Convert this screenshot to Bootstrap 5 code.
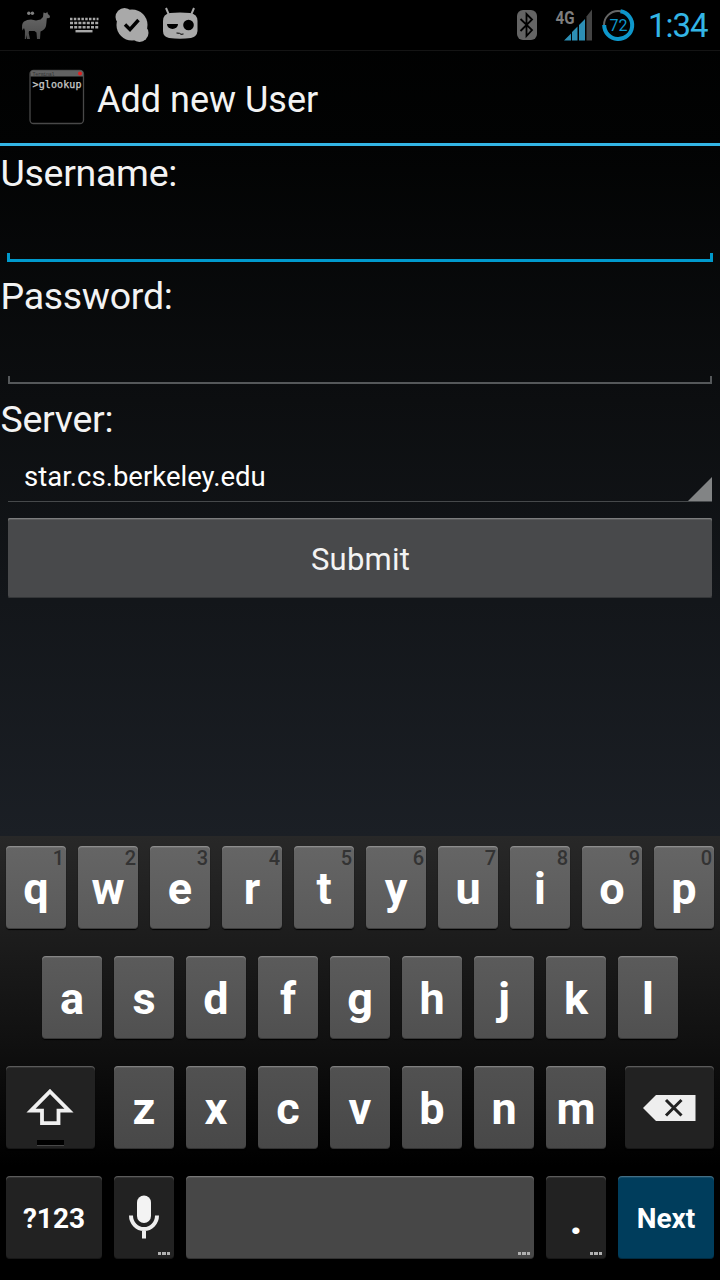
<!DOCTYPE html>
<html lang="en">
<head>
<meta charset="utf-8">
<meta name="viewport" content="width=device-width, initial-scale=1">
<title>Add new User</title>
<link href="https://cdn.jsdelivr.net/npm/bootstrap@5.3.0/dist/css/bootstrap.min.css" rel="stylesheet">
<style>
  body { font-family: Roboto, "Noto Sans", sans-serif; background: #000; color: #f3f3f3; }
  .phone { width: 720px; height: 1280px; background: linear-gradient(#000 0, #020303 146px, #0c0e10 400px, #13161a 600px, #1b1f25 836px); }
  .status { height: 51px; background: #000; border-bottom: 1px solid #141414; }
  .clock { font-size: 33px; line-height: 52px; color: #33b5e5; width: 61px; letter-spacing: -1px; white-space: nowrap; }
  .actionbar { height: 95px; border-bottom: 3px solid #33b5e5; padding: 0 0 1px 29px; }
  .page-title { font-size: 36px; line-height: 44px; margin-left: 12px; padding-top: 7px; }
  .field-group { height: 123px; }
  .field-label { font-size: 37.5px; line-height: 44px; padding: 5px 0 0 .5px; letter-spacing: -.3px; }
  .line-input { margin: 58px 8px 0; height: 8px; border: 2px solid #55585a; border-top: 0; }
  .line-input.active { margin: 58px 7px 0; height: 9px; border-color: #0099cc; border-width: 0 3px 3px; }
  .spinner-box { height: 61px; margin: 0 8px; border-bottom: 1px solid #46494b; padding: 0 0 0 16px; font-size: 27.5px; line-height: 32px; color: #fff; }
  .spinner-box span { padding-top: 12px; }
  .btn-submit { height: 80px; margin: 16px 8px 0; padding: 9px 0 6px 1px; border: 0; border-radius: 2px; background: #48494b; color: #f3f3f3; font-size: 31px; line-height: 36px; letter-spacing: .2px; box-shadow: inset 0 1px #7c7d7e, inset 0 2px #5a5b5c, inset 0 -1px #343638; }
  .keyboard { height: 444px; padding: 10px 6px 21px; background: linear-gradient(#282828 0, #111 200px, #000 330px); }
  .key-row { height: 83px; gap: 12px; }
  .key { width: 60px; height: 83px; flex: none; padding-top: 2px; border-radius: 4px; color: #fff; font-weight: 700; font-size: 45px; line-height: 81px; box-shadow: inset 0 1px rgba(255,255,255,.2), inset 0 2px rgba(255,255,255,.08), inset 0 -1px rgba(0,0,0,.3), 0 1px 1px #000; }
  .r1 .key { background: linear-gradient(#656565, #5a5a5a); }
  .r2 .key { background: linear-gradient(#5b5b5b, #505050); }
  .r3 .key { background: linear-gradient(#515151, #484848); }
  .r4 .key { background: #474747; }
  .keyboard .key.dark { background: #222; }
  .keyboard .key.next { background: #003d5c; }
  .wide { width: 96px; font-size: 28px; }
  .side { width: 89px; }
  .hint { right: 2px; top: 0; font-size: 20px; line-height: 24px; font-weight: 500; color: #333; }
  .more { right: 4px; bottom: 4px; display: flex; gap: 1px; }
  .more i { width: 3.3px; height: 3px; background: #b0b0b0; }
  svg { display: block; flex: none; }
</style>
</head>
<body>
<div class="phone d-flex flex-column overflow-hidden">
  <header class="status d-flex justify-content-between align-items-start">
    <svg width="220" height="50" viewBox="0 0 220 50">
      <defs><linearGradient id="fur" x2="0" y2="1"><stop offset="0" stop-color="#6a6a6a"/><stop offset="1" stop-color="#4c4c4c"/></linearGradient></defs>
      <!-- llama -->
      <path fill="url(#fur)" d="M43.500 12.500L46 13.300L47.200 11.800L48 14L50 16L49.500 18L46.800 18.300Q46.500 23 46 26Q45 29.500 40.500 31.500L40 39H37L36.500 32.500L34.500 31H29L28.700 33L30 39H27L26.500 35L26 39H24.800L25 31L24 28L22.500 30.500Q21 24 24 21.500Q27 19.500 31 19.500L36 20.500L40.500 19.500L43 17Z"/>
      <g fill="#808080"><circle cx="28.800" cy="13.300" r="1.700"/><circle cx="32.400" cy="13.300" r="1.700"/></g>
      <!-- keyboard -->
      <g stroke="#a8a8a8" stroke-width="2.400"><path stroke-dasharray="2.500 1.300" d="M70 19h28.500"/><path stroke-dasharray="3 1.200" d="M70 23h28.500M70 27.200h28.500"/><path d="M75.500 31.200h17"/></g>
      <!-- chat check -->
      <g fill="#a9a9a9"><circle cx="132" cy="25" r="15.500"/><circle cx="124.500" cy="17" r="9"/><circle cx="139.500" cy="33" r="9"/></g>
      <path d="M125 24.500l5 5 8.500-9.500" fill="none" stroke="#000" stroke-width="3.400"/>
      <!-- robot skull -->
      <path d="M169 15l-3-7M191 15l3-7" stroke="#a9a9a9" stroke-width="2"/>
      <path fill="#a9a9a9" d="M170 13Q180 12 190 13Q197.500 14 197.500 21V31Q197 36.500 191 38Q180 39.500 169 38Q163 36.500 163 31V21Q163 14 170 13z"/>
      <path d="M167 24h11a5.500 5 0 0 1-11 0z"/><circle cx="188.500" cy="25" r="5.300"/><path d="M176.500 33l3 .3 1.500 1 2.500-.3" fill="none" stroke="#000"/>
    </svg>
    <div class="d-flex">
      <svg width="146" height="50" viewBox="502 0 146 50">
        <rect x="517" y="10" width="20" height="30" rx="6" fill="#646464"/>
        <path d="M520.500 19l11.500 11-5.500 6V14l5.500 5.500L520.500 31" fill="none" stroke="#000" stroke-width="1.800"/>
        <text x="555.500" y="23.500" font-size="18" font-weight="700" fill="#7e7e7e" textLength="19" lengthAdjust="spacingAndGlyphs">4G</text>
        <g fill="#2d8fb5"><path d="M564 40.500l7-7v7zM572 40.500v-8.500l5.500-5.500v14zM579 40.500V25l6-6v21.500z"/><path fill="#444" d="M586.500 40.500v-24l5.500-7v31z"/></g>
        <circle cx="618" cy="25" r="14" fill="none" stroke="#666" stroke-width="2"/>
        <path d="M620.500 11.300A14 14 0 1 1 604.200 25" fill="none" stroke="#0e97cb" stroke-width="4"/>
        <text x="618.500" y="31" text-anchor="middle" font-size="17" fill="#0e97cb" textLength="18" lengthAdjust="spacingAndGlyphs">72</text>
      </svg>
      <div class="clock">1:34</div>
      <div style="width:11px"></div>
    </div>
  </header>

  <div class="actionbar d-flex align-items-center">
    <svg width="56" height="56" viewBox="0 0 56 56">
      <rect x="1" y="1.500" width="53.500" height="53" rx="3.500" fill="#000" stroke="#494949" stroke-width="1.300"/>
      <path d="M1.500 7.500V4q0-2.500 2.500-2.500h47.500q2.500 0 2.500 2.500v3.500z" fill="#626262"/>
      <text x="3.500" y="6.500" font-family="Liberation Mono, monospace" font-size="5" fill="#333" textLength="22">Terminal</text>
      <circle cx="51" cy="4.500" r="2" fill="#e02020"/>
      <text x="3.500" y="18.800" font-family="DejaVu Sans Mono, monospace" font-size="10" fill="#ccc" stroke="#ccc" stroke-width=".25" textLength="49">&gt;glookup</text>
    </svg>
    <h1 class="page-title fw-normal mb-0">Add new User</h1>
  </div>

  <main class="d-flex flex-column flex-grow-1">
    <div class="field-group"><div class="field-label">Username:</div><div class="line-input active"></div></div>
    <div class="field-group"><div class="field-label">Password:</div><div class="line-input"></div></div>
    <div class="field-label">Server:</div>
    <div class="spinner-box d-flex align-items-center justify-content-between">
      <span>star.cs.berkeley.edu</span>
      <svg class="align-self-end" width="24" height="24"><path d="M24 0v24H0z" fill="#828485"/></svg>
    </div>
    <button class="btn btn-submit" type="button">Submit</button>
  </main>

  <section class="keyboard d-flex flex-column justify-content-between text-center">
    <div class="key-row r1 d-flex">
      <div class="key position-relative">q<span class="hint position-absolute">1</span></div>
      <div class="key position-relative">w<span class="hint position-absolute">2</span></div>
      <div class="key position-relative">e<span class="hint position-absolute">3</span></div>
      <div class="key position-relative">r<span class="hint position-absolute">4</span></div>
      <div class="key position-relative">t<span class="hint position-absolute">5</span></div>
      <div class="key position-relative">y<span class="hint position-absolute">6</span></div>
      <div class="key position-relative">u<span class="hint position-absolute">7</span></div>
      <div class="key position-relative">i<span class="hint position-absolute">8</span></div>
      <div class="key position-relative">o<span class="hint position-absolute">9</span></div>
      <div class="key position-relative">p<span class="hint position-absolute">0</span></div>
    </div>
    <div class="key-row r2 d-flex justify-content-center">
      <div class="key">a</div><div class="key">s</div><div class="key">d</div><div class="key">f</div><div class="key">g</div><div class="key">h</div><div class="key">j</div><div class="key">k</div><div class="key">l</div>
    </div>
    <div class="key-row r3 d-flex justify-content-between">
      <div class="key side dark p-0">
        <svg width="89" height="83" viewBox="0 0 89 83"><path d="M44 25.500L63 44.700H52.500V57.200H36V44.700H25z" fill="none" stroke="#f0f0f0" stroke-width="3.800"/><path d="M31 74h27v5H31z"/><path d="M31 79.500h27" stroke="#484848"/></svg>
      </div>
      <div class="d-flex" style="gap:12px">
        <div class="key">z</div><div class="key">x</div><div class="key">c</div><div class="key">v</div><div class="key">b</div><div class="key">n</div><div class="key">m</div>
      </div>
      <div class="key side dark p-0">
        <svg width="89" height="83" viewBox="0 0 89 83"><path d="M18 42L31 29H70.500V55H31z" fill="#eee"/><path d="M41 34l15.500 15.500M56.500 34L41 49.500" stroke="#222" stroke-width="3"/></svg>
      </div>
    </div>
    <div class="key-row r4 d-flex">
      <div class="key wide dark">?123</div>
      <div class="key dark p-0 position-relative">
        <svg width="60" height="83" viewBox="0 0 60 83"><rect x="23" y="19.500" width="14" height="27.500" rx="7" fill="#f3f3f3"/><path d="M17 39.500a13 13.500 0 0 0 26 0M30 53v9.500" fill="none" stroke="#eee" stroke-width="4"/></svg>
        <span class="more position-absolute"><i></i><i></i><i></i></span>
      </div>
      <div class="key flex-fill position-relative"><span class="more position-absolute"><i></i><i></i><i></i></span></div>
      <div class="key dark position-relative">.<span class="more position-absolute"><i></i><i></i><i></i></span></div>
      <div class="key wide next">Next</div>
    </div>
  </section>
</div>
<script src="https://cdn.jsdelivr.net/npm/bootstrap@5.3.0/dist/js/bootstrap.bundle.min.js"></script>
</body>
</html>
